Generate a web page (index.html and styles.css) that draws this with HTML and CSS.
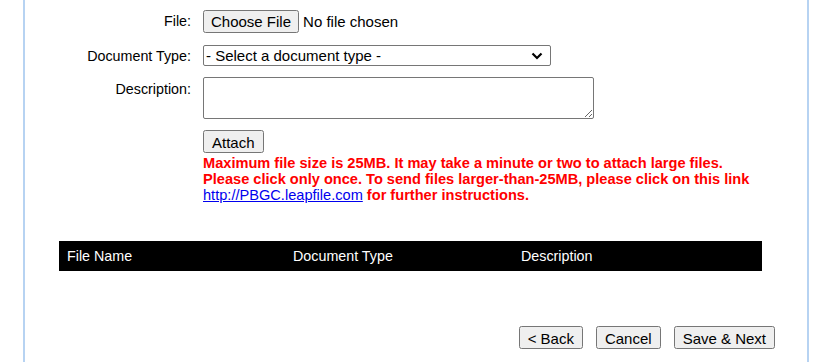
FILE: index.html
```html
<!DOCTYPE html>
<html lang="en">
<head>
    <meta charset="UTF-8">
    <meta name="viewport" content="width=device-width, initial-scale=1.0">
    <title>Upload Documents</title>
    <link rel="stylesheet" href="styles.css">
</head>
<body>
    <div class="page">
        <form id="uploadForm" class="upload-form">
            <label class="field-label" for="file">File:</label>
            <div class="field"><input type="file" id="file" name="file"></div>

            <label class="field-label" for="doctype">Document Type:</label>
            <div class="field select-wrap">
                <select id="doctype" name="doctype">
                    <option value="">- Select a document type -</option>
                </select>
                <svg class="select-arrow" width="12" height="8" viewBox="0 0 12 8">
                    <path d="M1.5 1.5 L6 6 L10.5 1.5" fill="none" stroke="#000" stroke-width="2.2"/>
                </svg>
            </div>

            <label class="field-label" for="description">Description:</label>
            <div class="field"><textarea id="description" name="description"></textarea></div>

            <div></div>
            <div class="field">
                <button type="button" class="attach-btn">Attach</button>
                <p class="warning">Maximum file size is 25MB. It may take a minute or two to attach large files.<br>Please click only once. To send files larger-than-25MB, please click on this link<br><a href="http://PBGC.leapfile.com">http://PBGC.leapfile.com</a> for further instructions.</p>
            </div>
        </form>

        <table class="attachments">
            <thead>
                <tr>
                    <th class="col-name">File Name</th>
                    <th class="col-type">Document Type</th>
                    <th>Description</th>
                </tr>
            </thead>
        </table>

        <div class="actions">
            <button type="button">&lt; Back</button>
            <button type="button">Cancel</button>
            <button type="submit">Save &amp; Next</button>
        </div>
    </div>
</body>
</html>
```

FILE: styles.css
```css
body {
    font-family: "Liberation Sans", Arial, sans-serif;
    font-size: 14.3px;
    margin: 0;
    background: white;
    color: #000;
}
.page {
    margin-left: 23px;
    width: 786px;
    min-height: 362px;
    box-sizing: border-box;
    border-left: 2px solid #b7d3f2;
    border-right: 2px solid #b7d3f2;
    padding-top: 10px;
}
.upload-form {
    display: grid;
    grid-template-columns: 166px 1fr;
    column-gap: 12px;
    row-gap: 12px;
    align-items: start;
}
.field-label {
    text-align: right;
    padding-top: 3px;
}
input, select, textarea, button {
    font-family: "Liberation Sans", Arial, sans-serif;
    font-size: 15px;
}
button {
    padding: 2px 7px;
}
.select-wrap {
    position: relative;
    width: 348px;
}
select {
    display: block;
    width: 348px;
    height: 21px;
    padding: 0 2px;
    border: 1px solid #767676;
    border-radius: 2px;
    background: white;
    color: #000;
    appearance: none;
    -webkit-appearance: none;
}
.select-arrow {
    position: absolute;
    right: 8px;
    top: 7px;
    pointer-events: none;
}
textarea {
    display: block;
    width: 391px;
    height: 42px;
    margin-top: -1px;
    box-sizing: border-box;
    border: 1px solid #767676;
    border-radius: 2px;
}
.attach-btn {
    display: block;
    height: 23px;
    margin-top: -1px;
}
.warning {
    margin: 2px 0 0;
    color: red;
    font-weight: bold;
    font-size: 14.6px;
    line-height: 16px;
}
.warning a {
    color: #0000ee;
    font-weight: normal;
}
.attachments {
    margin: 38px 0 0 34px;
    width: 703px;
    border-collapse: collapse;
    background: black;
    color: white;
}
.attachments th {
    text-align: left;
    font-weight: normal;
    font-size: 14.3px;
    padding: 6px 8px;
    height: 18px;
}
.col-name {
    width: 210px;
}
.col-type {
    width: 212px;
}
.actions {
    display: flex;
    justify-content: flex-end;
    gap: 13px;
    margin: 55px 32px 0 0;
}
.actions button {
    height: 23px;
}
```
